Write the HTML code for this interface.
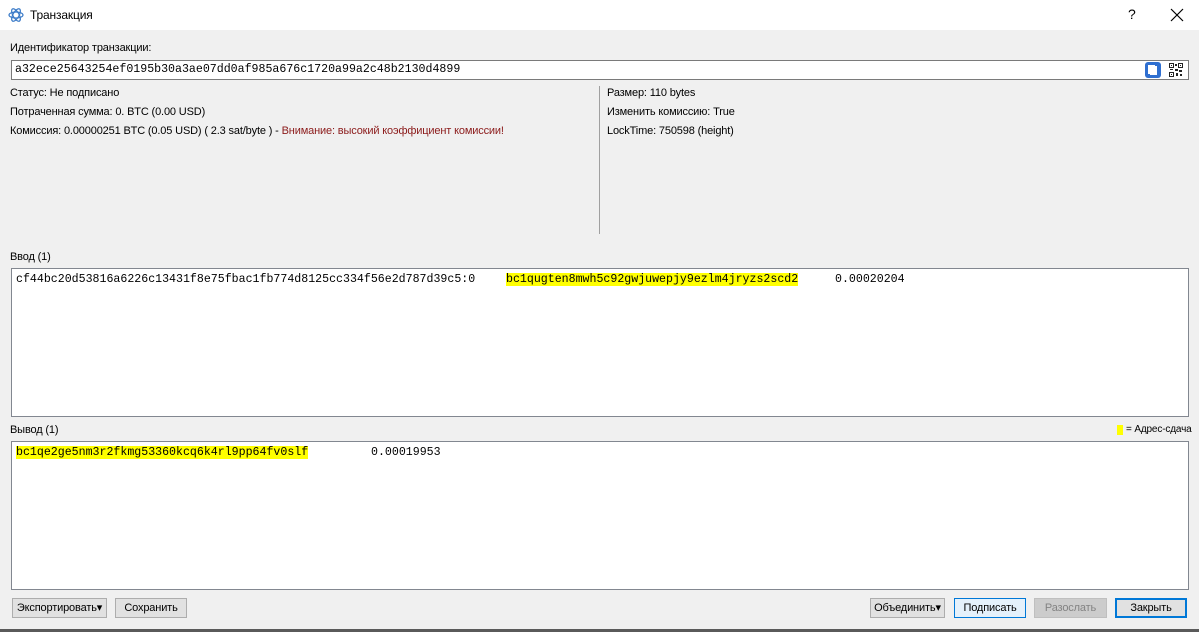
<!DOCTYPE html>
<html><head><meta charset="utf-8"><style>
*{margin:0;padding:0;box-sizing:border-box}
body{width:1199px;height:632px;background:#f0f0f0;font-family:"Liberation Sans",sans-serif;font-size:11px;color:#000;position:relative;overflow:hidden;letter-spacing:-0.15px}
.a{position:absolute;white-space:nowrap}
.mono{font-family:"Liberation Mono",monospace;font-size:11.6px;letter-spacing:0}
.box{position:absolute;background:#fff;border:1px solid #828790}
.hl{background:#ffff00}
.btn{position:absolute;height:20px;background:#e1e1e1;border:1px solid #adadad;text-align:center;line-height:18px;font-size:11px}
</style></head><body>
<div class="a" style="left:0;top:0;width:1199px;height:30px;background:#fff"></div>
<svg class="a" style="left:8px;top:7px" width="16" height="16" viewBox="0 0 16 16"><g fill="none" stroke="#3b7bc8" stroke-width="1.2"><ellipse cx="8" cy="8" rx="7" ry="3"/><ellipse cx="8" cy="8" rx="7" ry="3" transform="rotate(60 8 8)"/><ellipse cx="8" cy="8" rx="7" ry="3" transform="rotate(120 8 8)"/></g></svg>
<div class="a" style="left:30px;top:8px;font-size:12px">Транзакция</div>
<div class="a" style="left:1128px;top:6px;font-size:14px">?</div>
<svg class="a" style="left:1170px;top:8px" width="14" height="14"><path d="M1 1L13 13M13 1L1 13" stroke="#000" stroke-width="1.2"/></svg>

<div class="a" style="left:10px;top:42px">Идентификатор транзакции:</div>
<div class="box" style="left:11px;top:60px;width:1178px;height:20px;border-color:#7a7a7a"></div>
<div class="a mono" style="left:15px;top:63px">a32ece25643254ef0195b30a3ae07dd0af985a676c1720a99a2c48b2130d4899</div>
<div class="a" style="left:1145px;top:62px;width:16px;height:16px;background:#2f6fd0;border-radius:3px"><div style="position:absolute;left:5px;top:4px;width:7px;height:9px;background:#fff;box-shadow:-2px -1px 0 #fff"></div></div>
<svg class="a" style="left:1169px;top:63px" width="14" height="14" viewBox="0 0 14 14"><g fill="#222"><path d="M0 0h5v5H0zM9 0h5v5H9zM0 9h5v5H0z"/></g><g fill="#fff"><rect x="1" y="1" width="3" height="3"/><rect x="10" y="1" width="3" height="3"/><rect x="1" y="10" width="3" height="3"/></g><g fill="#222"><rect x="2" y="2" width="1" height="1"/><rect x="11" y="2" width="1" height="1"/><rect x="2" y="11" width="1" height="1"/><rect x="6" y="1" width="2" height="2"/><rect x="6" y="6" width="3" height="2"/><rect x="10" y="7" width="3" height="2"/><rect x="7" y="10" width="2" height="3"/><rect x="11" y="11" width="2" height="2"/><rect x="1" y="6" width="3" height="1"/></g></svg>

<div class="a" style="left:10px;top:87px">Статус: Не подписано</div>
<div class="a" style="left:10px;top:106px">Потраченная сумма: 0. BTC (0.00 USD)</div>
<div class="a" style="left:10px;top:125px">Комиссия: 0.00000251 BTC (0.05 USD) ( 2.3 sat/byte ) - <span style="color:#8b1a1a">Внимание: высокий коэффициент комиссии!</span></div>
<div class="a" style="left:599px;top:86px;width:1px;height:148px;background:#a0a0a0"></div>
<div class="a" style="left:607px;top:87px">Размер: 110 bytes</div>
<div class="a" style="left:607px;top:106px">Изменить комиссию: True</div>
<div class="a" style="left:607px;top:125px">LockTime: 750598 (height)</div>

<div class="a" style="left:10px;top:251px">Ввод (1)</div>
<div class="box" style="left:11px;top:268px;width:1178px;height:149px"></div>
<div class="a mono" style="left:16px;top:273px">cf44bc20d53816a6226c13431f8e75fbac1fb774d8125cc334f56e2d787d39c5:0</div>
<div class="a mono hl" style="left:506px;top:273px">bc1qugten8mwh5c92gwjuwepjy9ezlm4jryzs2scd2</div>
<div class="a mono" style="left:835px;top:273px">0.00020204</div>

<div class="a" style="left:10px;top:424px">Вывод (1)</div>
<div class="a" style="left:1117px;top:425px;width:6px;height:10px;background:#ffff00"></div>
<div class="a" style="left:1126px;top:424px;font-size:10px">= Адрес-сдача</div>
<div class="box" style="left:11px;top:441px;width:1178px;height:149px"></div>
<div class="a mono hl" style="left:16px;top:446px">bc1qe2ge5nm3r2fkmg53360kcq6k4rl9pp64fv0slf</div>
<div class="a mono" style="left:371px;top:446px">0.00019953</div>

<div class="btn" style="left:12px;top:598px;width:95px">Экспортировать▾</div>
<div class="btn" style="left:115px;top:598px;width:72px">Сохранить</div>
<div class="btn" style="left:870px;top:598px;width:75px">Объединить▾</div>
<div class="btn" style="left:954px;top:598px;width:72px;border-color:#0078d7;background:#e5f1fb">Подписать</div>
<div class="btn" style="left:1034px;top:598px;width:73px;background:#cccccc;border-color:#bfbfbf;color:#838383">Разослать</div>
<div class="btn" style="left:1115px;top:598px;width:72px;border:2px solid #0078d7;line-height:16px">Закрыть</div>
<div class="a" style="left:0;top:629px;width:1199px;height:3px;background:#5a5a5a"></div>
</body></html>
